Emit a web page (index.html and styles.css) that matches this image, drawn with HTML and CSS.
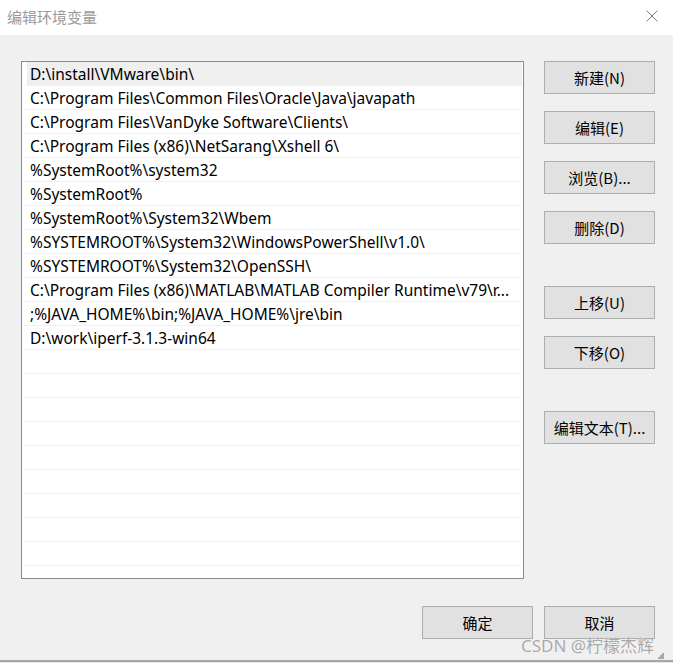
FILE: index.html
```html
<!DOCTYPE html>
<html lang="zh-CN">
<head>
<meta charset="utf-8">
<title>编辑环境变量</title>
<link rel="stylesheet" href="styles.css">
</head>
<body>
<div class="window">
  <div class="titlebar">
    <span class="title">编辑环境变量</span>
    <span class="close">
      <svg width="12" height="12" viewBox="0 0 12 12"><path d="M0.5 0.5 L11.5 11.5 M11.5 0.5 L0.5 11.5" stroke="#7a7a7a" stroke-width="1" fill="none"/></svg>
    </span>
  </div>
  <div class="content">
    <div class="main">
      <div class="list">
        <div class="row selected">D:\install\VMware\bin\</div>
        <div class="row">C:\Program Files\Common Files\Oracle\Java\javapath</div>
        <div class="row">C:\Program Files\VanDyke Software\Clients\</div>
        <div class="row">C:\Program Files (x86)\NetSarang\Xshell 6\</div>
        <div class="row">%SystemRoot%\system32</div>
        <div class="row">%SystemRoot%</div>
        <div class="row">%SystemRoot%\System32\Wbem</div>
        <div class="row">%SYSTEMROOT%\System32\WindowsPowerShell\v1.0\</div>
        <div class="row">%SYSTEMROOT%\System32\OpenSSH\</div>
        <div class="row">C:\Program Files (x86)\MATLAB\MATLAB Compiler Runtime\v79\r...</div>
        <div class="row">;%JAVA_HOME%\bin;%JAVA_HOME%\jre\bin</div>
        <div class="row">D:\work\iperf-3.1.3-win64</div>
        <div class="row"></div>
        <div class="row"></div>
        <div class="row"></div>
        <div class="row"></div>
        <div class="row"></div>
        <div class="row"></div>
        <div class="row"></div>
        <div class="row"></div>
        <div class="row"></div>
        <div class="row"></div>
      </div>
      <div class="side">
        <div class="group">
          <button class="btn">新建(N)</button>
          <button class="btn">编辑(E)</button>
          <button class="btn">浏览(B)...</button>
          <button class="btn">删除(D)</button>
        </div>
        <div class="group">
          <button class="btn">上移(U)</button>
          <button class="btn">下移(O)</button>
        </div>
        <div class="group">
          <button class="btn">编辑文本(T)...</button>
        </div>
      </div>
    </div>
    <div class="footer">
      <button class="btn">确定</button>
      <button class="btn">取消</button>
    </div>
  </div>
  <div class="watermark">CSDN @柠檬杰辉</div>
  <div class="grip">
    <svg width="6" height="6" viewBox="0 0 6 6"><rect x="4" y="0" width="2" height="2" fill="#a8a8a8"/><rect x="2" y="2" width="2" height="2" fill="#a8a8a8"/><rect x="4" y="2" width="2" height="2" fill="#a8a8a8"/><rect x="0" y="4" width="2" height="2" fill="#a8a8a8"/><rect x="2" y="4" width="2" height="2" fill="#a8a8a8"/><rect x="4" y="4" width="2" height="2" fill="#a8a8a8"/></svg>
  </div>
  <div class="bottomedge"></div>
</div>
</body>
</html>
```
FILE: styles.css
```css
* { box-sizing: border-box; }
html, body {
  margin: 0;
  padding: 0;
  width: 673px;
  height: 663px;
  overflow: hidden;
  background: #f0f0f0;
  font-family: "Noto Sans", "Noto Sans CJK SC", sans-serif;
  font-size: 15px;
  color: #000;
}
.window {
  position: relative;
  width: 673px;
  height: 663px;
  display: flex;
  flex-direction: column;
}
.titlebar {
  height: 35px;
  background: #fff;
  display: flex;
  align-items: center;
  justify-content: space-between;
  padding: 0 15px 3px 7px;
}
.title {
  font-family: "Noto Sans CJK SC", sans-serif;
  font-size: 15px;
  color: #9a9a9a;
}
.close {
  display: flex;
  align-items: center;
}
.content {
  padding: 26px 18px 0 21px;
  display: flex;
  flex-direction: column;
}
.main {
  display: flex;
  gap: 20px;
}
.list {
  width: 503px;
  height: 518px;
  border: 1px solid #8a8a8e;
  background: #fff;
  overflow: hidden;
}
.row {
  height: 24px;
  line-height: 24px;
  font-size: 15.5px;
  border-bottom: 1px solid #f0f0f0;
  padding-left: 8px;
  margin-right: 1px;
  white-space: nowrap;
  overflow: hidden;
}
.row.selected {
  background: #efefef;
  border-bottom-color: #efefef;
  margin-left: 5px;
  padding-left: 3px;
}
.side {
  width: 111px;
  display: flex;
  flex-direction: column;
  gap: 42px;
}
.group {
  display: flex;
  flex-direction: column;
  gap: 17px;
}
.btn {
  width: 111px;
  height: 33px;
  background: #e1e1e1;
  border: 1px solid #adadad;
  font-family: "Noto Sans CJK SC", sans-serif;
  font-size: 15px;
  color: #000;
  padding: 0;
  margin: 0;
}
.footer {
  display: flex;
  justify-content: flex-end;
  gap: 11px;
  margin-top: 27px;
}
.watermark {
  position: absolute;
  left: 521px;
  top: 632px;
  font-family: "Noto Sans", "Noto Sans CJK SC", sans-serif;
  font-size: 17px;
  color: #a9a9a9;
  text-shadow: 0 0 1px #fff;
  white-space: nowrap;
}
.grip {
  position: absolute;
  left: 658px;
  top: 653px;
  width: 6px;
  height: 6px;
  display: flex;
}
.bottomedge {
  position: absolute;
  left: 0;
  bottom: 0;
  width: 673px;
  height: 3px;
  border-top: 2px solid #a6a6a6;
  background: #e6e6e6;
}
```
